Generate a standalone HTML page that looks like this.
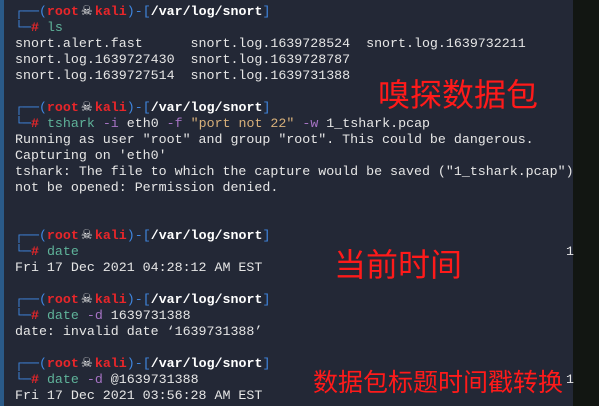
<!DOCTYPE html>
<html><head><meta charset="utf-8"><style>
html,body{margin:0;padding:0;}
body{width:599px;height:406px;overflow:hidden;background:#232836;position:relative;font-family:"Liberation Mono","DejaVu Sans Mono",monospace;font-size:13.3px;color:#e6e6e6;}
#left{position:absolute;left:0;top:0;width:4px;height:406px;background:#2a5a88;}
#right{position:absolute;left:573px;top:0;width:26px;height:406px;background:#121612;}
#t{position:absolute;left:15px;top:4px;line-height:16px;white-space:pre;}
.b{color:#3f86e0}.r{color:#e8262a;font-weight:bold}.w{color:#fff;font-weight:bold}
.g{color:#5fb39a}.p{color:#a673c4}.y{color:#d8b07a}
.s{color:#e8e8e8;font-family:"DejaVu Sans",sans-serif;font-weight:normal;display:inline-block;width:16px;text-align:center;}
.cn{position:absolute;color:#ff1a1a;font-family:"Noto Sans CJK SC","WenQuanYi Zen Hei",sans-serif;white-space:nowrap;line-height:1;}
.one{position:absolute;left:566px;color:#e6e6e6;}
</style></head><body>
<div id="left"></div><div id="right"></div>
<div id="t"><span class="b">┌──(</span><span class="r">root<span class="s">☠&#xFE0E;</span>kali</span><span class="b">)-[</span><span class="w">/var/log/snort</span><span class="b">]</span>
<span class="b">└─</span><span class="r">#</span> <span class="g">ls</span>
snort.alert.fast      snort.log.1639728524  snort.log.1639732211
snort.log.1639727430  snort.log.1639728787
snort.log.1639727514  snort.log.1639731388

<span class="b">┌──(</span><span class="r">root<span class="s">☠&#xFE0E;</span>kali</span><span class="b">)-[</span><span class="w">/var/log/snort</span><span class="b">]</span>
<span class="b">└─</span><span class="r">#</span> <span class="g">tshark</span> <span class="p">-i</span> eth0 <span class="p">-f</span> <span class="y">"port not 22"</span> <span class="p">-w</span> 1_tshark.pcap
Running as user "root" and group "root". This could be dangerous.
Capturing on 'eth0'
tshark: The file to which the capture would be saved ("1_tshark.pcap")
not be opened: Permission denied.


<span class="b">┌──(</span><span class="r">root<span class="s">☠&#xFE0E;</span>kali</span><span class="b">)-[</span><span class="w">/var/log/snort</span><span class="b">]</span>
<span class="b">└─</span><span class="r">#</span> <span class="g">date</span>
Fri 17 Dec 2021 04:28:12 AM EST

<span class="b">┌──(</span><span class="r">root<span class="s">☠&#xFE0E;</span>kali</span><span class="b">)-[</span><span class="w">/var/log/snort</span><span class="b">]</span>
<span class="b">└─</span><span class="r">#</span> <span class="g">date</span> <span class="p">-d</span> 1639731388
date: invalid date ‘1639731388’

<span class="b">┌──(</span><span class="r">root<span class="s">☠&#xFE0E;</span>kali</span><span class="b">)-[</span><span class="w">/var/log/snort</span><span class="b">]</span>
<span class="b">└─</span><span class="r">#</span> <span class="g">date</span> <span class="p">-d</span> @1639731388
Fri 17 Dec 2021 03:56:28 AM EST</div>
<div class="one" style="top:244px;line-height:16px">1</div>
<div class="one" style="top:372px;line-height:16px">1</div>
<div class="cn" style="left:378px;top:77px;font-size:32px;">嗅探数据包</div>
<div class="cn" style="left:334px;top:247px;font-size:32px;">当前时间</div>
<div class="cn" style="left:313px;top:369px;font-size:25px;">数据包标题时间戳转换</div>
</body></html>
